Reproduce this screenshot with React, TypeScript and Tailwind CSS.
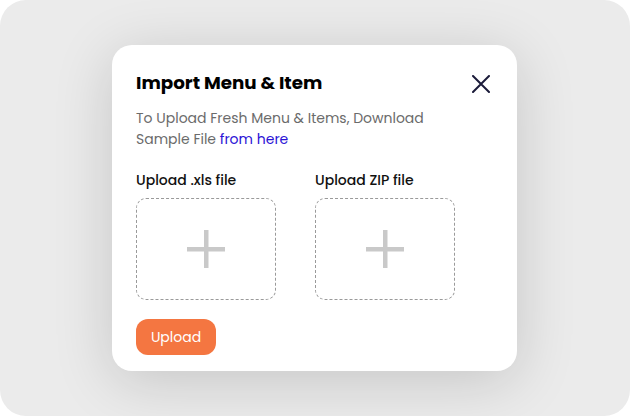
function Dropzone({ label }: { label: string }) {
  return (
    <div className="flex flex-col">
      <span className="text-[14px] leading-[20px] font-medium text-[#111]">{label}</span>
      <div className="mt-[8px] w-[140px] h-[102px] rounded-[10px] border border-dashed border-[#9a9a9a] flex items-center justify-center">
        <svg width="38" height="38" viewBox="0 0 38 38">
          <rect x="17" y="0" width="4.5" height="38" fill="#c9c9c9" />
          <rect x="0" y="17" width="38" height="4.5" fill="#c9c9c9" />
        </svg>
      </div>
    </div>
  );
}

export default function App() {
  return (
    <div className="w-[630px] h-[416px] bg-white">
      <div
        className="w-full h-full rounded-[26px] bg-[#ebebeb] flex items-start justify-center pt-[45px]"
        style={{ fontFamily: '"Poppins", "Noto Sans", sans-serif' }}
      >
        <div className="w-[405px] h-[326px] ml-[-1px] bg-white rounded-[20px] shadow-[0_10px_60px_rgba(0,0,0,0.16)] px-[24px] pt-[25px]">
          <div className="flex items-center justify-between">
            <h2 className="text-[18.3px] leading-[26px] font-bold text-black">Import Menu &amp; Item</h2>
            <button className="mr-[3px] mt-[1px] text-[#1b1b3a]">
              <svg width="18" height="18" viewBox="0 0 18 18" fill="none" stroke="currentColor" strokeWidth="2" strokeLinecap="round">
                <path d="M1 1L17 17M17 1L1 17" />
              </svg>
            </button>
          </div>
          <div className="mt-[12px] text-[14px] leading-[21px] text-[#6b6b6b]">
            <p>To Upload Fresh Menu &amp; Items, Download</p>
            <p>
              Sample File <span className="text-[#2a12d6]">from here</span>
            </p>
          </div>
          <div className="mt-[20px] flex gap-[39px]">
            <Dropzone label="Upload .xls file" />
            <Dropzone label="Upload ZIP file" />
          </div>
          <button className="mt-[19px] w-[80px] h-[36px] rounded-[12px] bg-[#f47641] text-white text-[14px]">
            Upload
          </button>
        </div>
      </div>
    </div>
  );
}
